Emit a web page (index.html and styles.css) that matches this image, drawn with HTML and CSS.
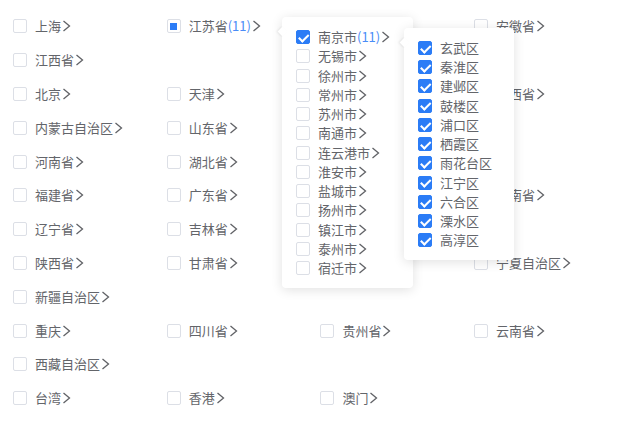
FILE: index.html
```html
<!DOCTYPE html>
<html lang="zh-CN">
<head>
<meta charset="utf-8">
<title>地区选择</title>
<link rel="stylesheet" href="styles.css">
</head>
<body>
<div class="page">
  <div class="rows">
    <div class="row">
      <div class="item"><span class="cb"></span><span class="lbl">上海</span><svg class="chev" viewBox="0 0 9 12"><polyline points="1.5,1 7.5,6 1.5,11"/></svg></div>
      <div class="item"><span class="cb partial"></span><span class="lbl">江苏省<em class="count">(11)</em></span><svg class="chev" viewBox="0 0 9 12"><polyline points="1.5,1 7.5,6 1.5,11"/></svg></div>
      <div class="item"></div>
      <div class="item"><span class="cb"></span><span class="lbl">安徽省</span><svg class="chev" viewBox="0 0 9 12"><polyline points="1.5,1 7.5,6 1.5,11"/></svg></div>
    </div>
    <div class="row">
      <div class="item"><span class="cb"></span><span class="lbl">江西省</span><svg class="chev" viewBox="0 0 9 12"><polyline points="1.5,1 7.5,6 1.5,11"/></svg></div>
    </div>
    <div class="row">
      <div class="item"><span class="cb"></span><span class="lbl">北京</span><svg class="chev" viewBox="0 0 9 12"><polyline points="1.5,1 7.5,6 1.5,11"/></svg></div>
      <div class="item"><span class="cb"></span><span class="lbl">天津</span><svg class="chev" viewBox="0 0 9 12"><polyline points="1.5,1 7.5,6 1.5,11"/></svg></div>
      <div class="item"></div>
      <div class="item"><span class="cb"></span><span class="lbl">山西省</span><svg class="chev" viewBox="0 0 9 12"><polyline points="1.5,1 7.5,6 1.5,11"/></svg></div>
    </div>
    <div class="row">
      <div class="item"><span class="cb"></span><span class="lbl">内蒙古自治区</span><svg class="chev" viewBox="0 0 9 12"><polyline points="1.5,1 7.5,6 1.5,11"/></svg></div>
      <div class="item"><span class="cb"></span><span class="lbl">山东省</span><svg class="chev" viewBox="0 0 9 12"><polyline points="1.5,1 7.5,6 1.5,11"/></svg></div>
    </div>
    <div class="row">
      <div class="item"><span class="cb"></span><span class="lbl">河南省</span><svg class="chev" viewBox="0 0 9 12"><polyline points="1.5,1 7.5,6 1.5,11"/></svg></div>
      <div class="item"><span class="cb"></span><span class="lbl">湖北省</span><svg class="chev" viewBox="0 0 9 12"><polyline points="1.5,1 7.5,6 1.5,11"/></svg></div>
    </div>
    <div class="row">
      <div class="item"><span class="cb"></span><span class="lbl">福建省</span><svg class="chev" viewBox="0 0 9 12"><polyline points="1.5,1 7.5,6 1.5,11"/></svg></div>
      <div class="item"><span class="cb"></span><span class="lbl">广东省</span><svg class="chev" viewBox="0 0 9 12"><polyline points="1.5,1 7.5,6 1.5,11"/></svg></div>
      <div class="item"></div>
      <div class="item"><span class="cb"></span><span class="lbl">海南省</span><svg class="chev" viewBox="0 0 9 12"><polyline points="1.5,1 7.5,6 1.5,11"/></svg></div>
    </div>
    <div class="row">
      <div class="item"><span class="cb"></span><span class="lbl">辽宁省</span><svg class="chev" viewBox="0 0 9 12"><polyline points="1.5,1 7.5,6 1.5,11"/></svg></div>
      <div class="item"><span class="cb"></span><span class="lbl">吉林省</span><svg class="chev" viewBox="0 0 9 12"><polyline points="1.5,1 7.5,6 1.5,11"/></svg></div>
    </div>
    <div class="row">
      <div class="item"><span class="cb"></span><span class="lbl">陕西省</span><svg class="chev" viewBox="0 0 9 12"><polyline points="1.5,1 7.5,6 1.5,11"/></svg></div>
      <div class="item"><span class="cb"></span><span class="lbl">甘肃省</span><svg class="chev" viewBox="0 0 9 12"><polyline points="1.5,1 7.5,6 1.5,11"/></svg></div>
      <div class="item"></div>
      <div class="item"><span class="cb"></span><span class="lbl">宁夏自治区</span><svg class="chev" viewBox="0 0 9 12"><polyline points="1.5,1 7.5,6 1.5,11"/></svg></div>
    </div>
    <div class="row">
      <div class="item"><span class="cb"></span><span class="lbl">新疆自治区</span><svg class="chev" viewBox="0 0 9 12"><polyline points="1.5,1 7.5,6 1.5,11"/></svg></div>
    </div>
    <div class="row">
      <div class="item"><span class="cb"></span><span class="lbl">重庆</span><svg class="chev" viewBox="0 0 9 12"><polyline points="1.5,1 7.5,6 1.5,11"/></svg></div>
      <div class="item"><span class="cb"></span><span class="lbl">四川省</span><svg class="chev" viewBox="0 0 9 12"><polyline points="1.5,1 7.5,6 1.5,11"/></svg></div>
      <div class="item"><span class="cb"></span><span class="lbl">贵州省</span><svg class="chev" viewBox="0 0 9 12"><polyline points="1.5,1 7.5,6 1.5,11"/></svg></div>
      <div class="item"><span class="cb"></span><span class="lbl">云南省</span><svg class="chev" viewBox="0 0 9 12"><polyline points="1.5,1 7.5,6 1.5,11"/></svg></div>
    </div>
    <div class="row">
      <div class="item"><span class="cb"></span><span class="lbl">西藏自治区</span><svg class="chev" viewBox="0 0 9 12"><polyline points="1.5,1 7.5,6 1.5,11"/></svg></div>
    </div>
    <div class="row">
      <div class="item"><span class="cb"></span><span class="lbl">台湾</span><svg class="chev" viewBox="0 0 9 12"><polyline points="1.5,1 7.5,6 1.5,11"/></svg></div>
      <div class="item"><span class="cb"></span><span class="lbl">香港</span><svg class="chev" viewBox="0 0 9 12"><polyline points="1.5,1 7.5,6 1.5,11"/></svg></div>
      <div class="item"><span class="cb"></span><span class="lbl">澳门</span><svg class="chev" viewBox="0 0 9 12"><polyline points="1.5,1 7.5,6 1.5,11"/></svg></div>
    </div>
  </div>

  <div class="popup popup-city">
    <div class="pitem"><span class="cb checked"></span><span class="lbl">南京市<em class="count">(11)</em></span><svg class="chev" viewBox="0 0 9 12"><polyline points="1.5,1 7.5,6 1.5,11"/></svg></div>
    <div class="pitem"><span class="cb"></span><span class="lbl">无锡市</span><svg class="chev" viewBox="0 0 9 12"><polyline points="1.5,1 7.5,6 1.5,11"/></svg></div>
    <div class="pitem"><span class="cb"></span><span class="lbl">徐州市</span><svg class="chev" viewBox="0 0 9 12"><polyline points="1.5,1 7.5,6 1.5,11"/></svg></div>
    <div class="pitem"><span class="cb"></span><span class="lbl">常州市</span><svg class="chev" viewBox="0 0 9 12"><polyline points="1.5,1 7.5,6 1.5,11"/></svg></div>
    <div class="pitem"><span class="cb"></span><span class="lbl">苏州市</span><svg class="chev" viewBox="0 0 9 12"><polyline points="1.5,1 7.5,6 1.5,11"/></svg></div>
    <div class="pitem"><span class="cb"></span><span class="lbl">南通市</span><svg class="chev" viewBox="0 0 9 12"><polyline points="1.5,1 7.5,6 1.5,11"/></svg></div>
    <div class="pitem"><span class="cb"></span><span class="lbl">连云港市</span><svg class="chev" viewBox="0 0 9 12"><polyline points="1.5,1 7.5,6 1.5,11"/></svg></div>
    <div class="pitem"><span class="cb"></span><span class="lbl">淮安市</span><svg class="chev" viewBox="0 0 9 12"><polyline points="1.5,1 7.5,6 1.5,11"/></svg></div>
    <div class="pitem"><span class="cb"></span><span class="lbl">盐城市</span><svg class="chev" viewBox="0 0 9 12"><polyline points="1.5,1 7.5,6 1.5,11"/></svg></div>
    <div class="pitem"><span class="cb"></span><span class="lbl">扬州市</span><svg class="chev" viewBox="0 0 9 12"><polyline points="1.5,1 7.5,6 1.5,11"/></svg></div>
    <div class="pitem"><span class="cb"></span><span class="lbl">镇江市</span><svg class="chev" viewBox="0 0 9 12"><polyline points="1.5,1 7.5,6 1.5,11"/></svg></div>
    <div class="pitem"><span class="cb"></span><span class="lbl">泰州市</span><svg class="chev" viewBox="0 0 9 12"><polyline points="1.5,1 7.5,6 1.5,11"/></svg></div>
    <div class="pitem"><span class="cb"></span><span class="lbl">宿迁市</span><svg class="chev" viewBox="0 0 9 12"><polyline points="1.5,1 7.5,6 1.5,11"/></svg></div>
  </div>

  <div class="popup popup-district">
    <div class="pitem"><span class="cb checked"></span><span class="lbl">玄武区</span></div>
    <div class="pitem"><span class="cb checked"></span><span class="lbl">秦淮区</span></div>
    <div class="pitem"><span class="cb checked"></span><span class="lbl">建邺区</span></div>
    <div class="pitem"><span class="cb checked"></span><span class="lbl">鼓楼区</span></div>
    <div class="pitem"><span class="cb checked"></span><span class="lbl">浦口区</span></div>
    <div class="pitem"><span class="cb checked"></span><span class="lbl">栖霞区</span></div>
    <div class="pitem"><span class="cb checked"></span><span class="lbl">雨花台区</span></div>
    <div class="pitem"><span class="cb checked"></span><span class="lbl">江宁区</span></div>
    <div class="pitem"><span class="cb checked"></span><span class="lbl">六合区</span></div>
    <div class="pitem"><span class="cb checked"></span><span class="lbl">溧水区</span></div>
    <div class="pitem"><span class="cb checked"></span><span class="lbl">高淳区</span></div>
  </div>
</div>
</body>
</html>
```

FILE: styles.css
```css
html, body {
  margin: 0;
  padding: 0;
  background: #ffffff;
}

body {
  font-family: "Noto Sans CJK SC", "Noto Sans", sans-serif;
  font-size: 13px;
  color: #63656a;
}

.page {
  position: relative;
  width: 644px;
  height: 423px;
  overflow: hidden;
}

.rows {
  padding: 9.6px 0 0 13px;
}

.row {
  display: grid;
  grid-template-columns: repeat(4, 153.7px);
  height: 33.8px;
}

.item {
  display: flex;
  align-items: center;
  height: 33.8px;
  white-space: nowrap;
}

.cb {
  position: relative;
  flex: none;
  box-sizing: border-box;
  width: 14px;
  height: 14px;
  margin-right: 8px;
  border: 1px solid #dcdfe6;
  border-radius: 2px;
  background: #ffffff;
}

.cb.partial::after {
  content: "";
  position: absolute;
  left: 2.5px;
  top: 2.5px;
  width: 7px;
  height: 7px;
  background: #2b7cf6;
}

.cb.checked {
  background: #2b7cf6;
  border-color: #2b7cf6;
}

.cb.checked::after {
  content: "";
  position: absolute;
  left: 3.6px;
  top: 0.6px;
  width: 3.5px;
  height: 7.5px;
  border: solid #ffffff;
  border-width: 0 2px 2px 0;
  transform: rotate(45deg);
}

.lbl {
  line-height: 16px;
}

.count {
  font-style: normal;
  color: #4a8cf7;
}

.chev {
  flex: none;
  width: 9px;
  height: 12px;
  margin-left: 1px;
  fill: none;
  stroke: #606266;
  stroke-width: 1.3;
  stroke-linejoin: miter;
}

.popup {
  position: absolute;
  box-sizing: border-box;
  background: #ffffff;
  border-radius: 4px;
  box-shadow: 0 2px 12px 0 rgba(0, 0, 0, 0.12);
}

.popup::before {
  content: "";
  position: absolute;
  width: 7px;
  height: 7px;
  background: #ffffff;
  transform: rotate(45deg);
  box-shadow: -1px 1px 2px rgba(0, 0, 0, 0.07);
}

.popup-city {
  left: 282px;
  top: 17px;
  width: 131px;
  padding: 10.4px 14px;
}

.popup-city::before {
  left: -3.5px;
  top: 10.5px;
}

.popup-district {
  left: 404px;
  top: 28.3px;
  width: 109.5px;
  padding: 10px 14px;
}

.popup-district::before {
  left: -3.5px;
  top: 10.5px;
}

.pitem {
  display: flex;
  align-items: center;
  height: 19.25px;
  white-space: nowrap;
}
```
